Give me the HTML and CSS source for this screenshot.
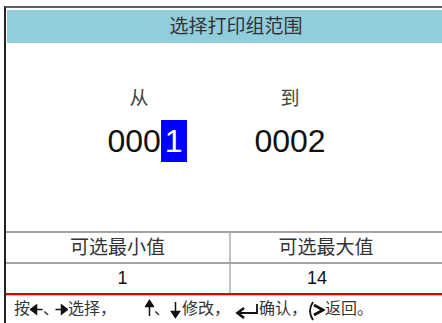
FILE: index.html
```html
<!doctype html>

<html lang="zh-CN">
  <head>
    <meta charset="utf-8">
    <title>选择打印组范围</title>
    <link rel="stylesheet" href="styles.css">
  </head>

  <body>
    <div class="screen">
      <div class="title">选择打印组范围</div>

      <section class="range">
        <div class="col from">
          <p class="label">从</p>
          <p class="num">000<span class="cur">1</span></p>
        </div>
        <div class="col to">
          <p class="label">到</p>
          <p class="num">0002</p>
        </div>
      </section>

      <div class="limits">
        <div class="row head">
          <div class="cell min">可选最小值</div>
          <div class="cell max">可选最大值</div>
        </div>
        <div class="row vals">
          <div class="cell min">1</div>
          <div class="cell max">14</div>
        </div>
      </div>

      <div class="hint">
        <span class="ch">按</span>
        <svg class="key left" width="13" height="28" viewBox="0 0 13 28">
          <path d="M0.5 14.5 L6.5 10 L6.5 19 Z" />
          <line x1="5" y1="14.5" x2="12.5" y2="14.5" />
        </svg>
        <span class="ch dun">、</span>
        <svg class="key right" width="13" height="28" viewBox="0 0 13 28">
          <path d="M12.5 14.5 L6.5 10 L6.5 19 Z" />
          <line x1="0.5" y1="14.5" x2="8" y2="14.5" />
        </svg>
        <span class="ch">选择，</span>
        <svg class="key up" width="9" height="28" viewBox="0 0 9 28">
          <path d="M4.5 5.5 L0.5 11.5 L8.5 11.5 Z" />
          <line x1="4.5" y1="10" x2="4.5" y2="21" />
        </svg>
        <span class="ch dun wide">、</span>
        <svg class="key down" width="12" height="28" viewBox="0 0 12 28">
          <path d="M5.5 22.5 L1.5 16.5 L9.5 16.5 Z" />
          <line x1="5.5" y1="7" x2="5.5" y2="18" />
        </svg>
        <span class="ch">修改，</span>
        <svg class="key enter" width="24" height="28" viewBox="0 0 24 28">
          <path class="open" d="M9 13 L2.5 18 L9 23" />
          <path class="open thin" d="M3 18 L22 18 L22 9" />
        </svg>
        <span class="ch">确认，</span>
        <svg class="key esc" width="18" height="28" viewBox="0 0 18 28">
          <path class="open thin" d="M6 7 Q0 16 6 25" />
          <path class="open" d="M7 10 L16 15 L7 20" />
        </svg>
        <span class="ch">返回。</span>
      </div>
    </div>
  </body>
</html>
```

FILE: styles.css
```css
:root {
  --title: #92cddc;
  --ink: #2e2e2e;
  --rule: #a4a4a4;
  --rule-light: #c2c2c2;
  --red: #e00000;
  --cursor: #0000ff;
}

html {
overflow: hidden;
background: #fff;
font-family: "Liberation Sans", "Noto Sans CJK SC", sans-serif;
color: var(--ink);
}

body {
margin: 0;
}

p {
margin: 0;
}

.screen {
margin: 6px 0 0 4px;
padding: 2px 0 0 1px;
border-top: 2px solid #5e5e5e;
border-left: 2px solid #222;
}

.title {
height: 33px;
padding-left: 23px;
line-height: 33px;
background: var(--title);
text-align: center;
font-size: 19px;
color: #333;
}

.range {
display: flex;
height: 144px;
padding-top: 44px;
}

.col {
display: flex;
flex-direction: column;
align-items: center;
gap: 9px;
}

.from {
width: 160px;
margin-left: 60px;
}

.to {
width: 140px;
margin-left: -7px;
}

.label {
line-height: 24px;
font-size: 19px;
color: #444;
}

.from .label {
margin-right: 16px;
}

.num {
line-height: 42px;
font-size: 32px;
color: #111;
}

.cur {
display: inline-block;
padding: 0 4px;
background: var(--cursor);
color: #fff;
}

.limits {
margin-left: -1px;
}

.row {
display: flex;
height: 29px;
border-top: 2px solid var(--rule);
}

.row.vals {
border-bottom: 2px solid var(--red);
box-shadow: 0 1px 0 #f6b0b0;
}

.cell {
line-height: 29px;
text-align: center;
}

.cell.min {
width: 223px;
border-right: 2px solid var(--rule-light);
}

.cell.max {
width: 190px;
}

.head .cell {
font-size: 19px;
color: #333;
}

.vals .cell {
font-size: 18px;
color: #111;
}

.vals .cell.min {
width: 213px;
padding-left: 10px;
}

.vals .cell.max {
width: 172px;
padding-right: 18px;
}

.hint {
display: flex;
align-items: center;
height: 28px;
padding-left: 7px;
font-size: 16px;
color: #333;
}

.ch {
line-height: 28px;
}

.ch.dun {
width: 12px;
}

.ch.dun.wide {
width: 16px;
}

.key {
display: block;
flex: none;
fill: #111;
stroke: #111;
stroke-width: 1.5;
}

.key .open {
fill: none;
stroke-width: 2.6;
}

.key .open.thin {
stroke-width: 1.8;
}

.key.up {
margin-left: 29px;
}

.key.enter {
margin-left: 5px;
}
```
